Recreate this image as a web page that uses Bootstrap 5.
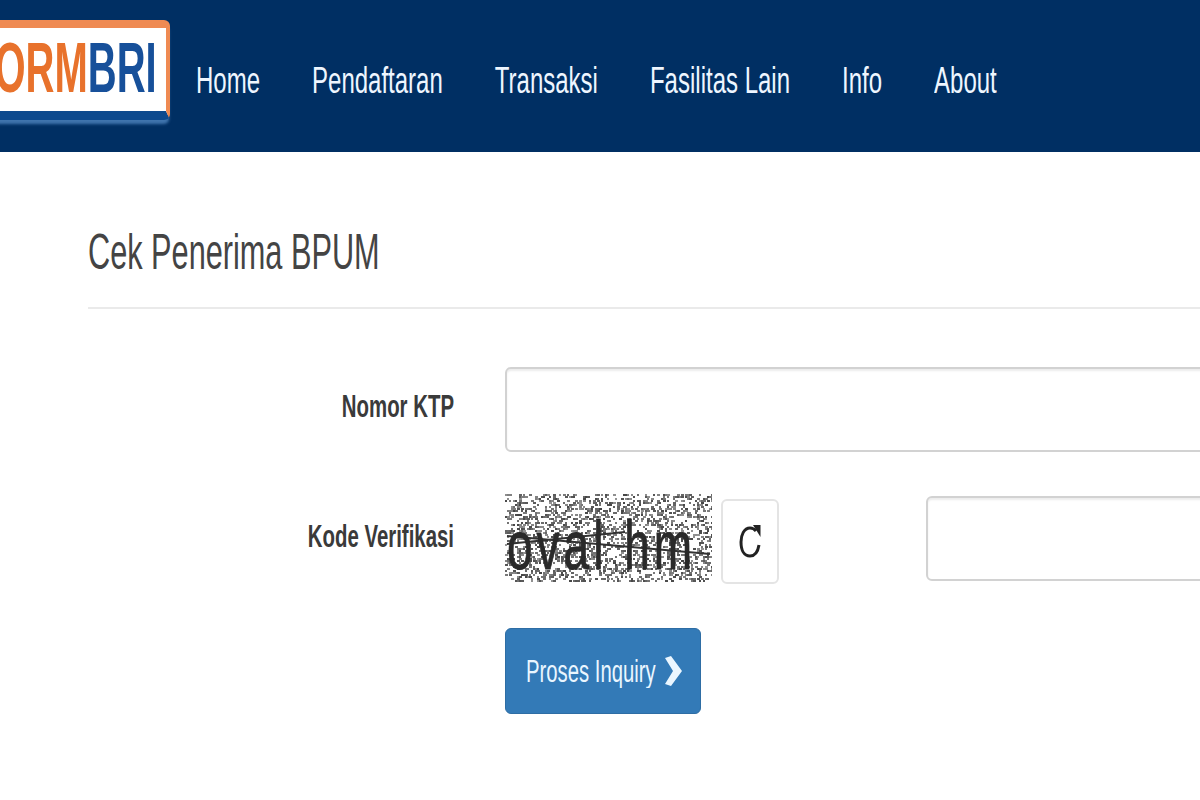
<!DOCTYPE html>
<html lang="id">
<head>
    <meta charset="UTF-8">
    <meta name="viewport" content="width=device-width, initial-scale=1.0">
    <title>Cek Penerima BPUM</title>
    <link href="https://cdn.jsdelivr.net/npm/bootstrap@5.3.0/dist/css/bootstrap.min.css" rel="stylesheet">
    <style>
        html, body { overflow: hidden; height: 100%; }
        body { font-family: "Liberation Sans", Arial, sans-serif; color: #333; background: #fff; }

        /* the screenshot is stretched vertically, so text gets scaled up on Y only */
        .tall { display: inline-block; transform: scaleY(1.55); transform-origin: center; }

        .top-bar { background: #002f63; height: 152px; padding: 0; flex-wrap: nowrap; justify-content: flex-start; }
        .logo-box {
            width: 220px; height: 100px; margin: 0 0 0 -50px; flex-shrink: 0; align-self: flex-start; margin-top: 20px;
            background: #fff; border: solid #ef8a52; border-width: 8px 4px 0 0; border-radius: 5px 6px 6px 0;
            box-shadow: 0 5px 3px -1px #3f74ad;
            border-bottom: 9px solid #0d4a8e;
            padding-left: 20px; overflow: hidden; white-space: nowrap;
            font-weight: 700; font-size: 40px; line-height: 78px; letter-spacing: 0;
        }
        .logo-box .tall { transform: scaleY(1.75); }
        .logo-or { color: #e8722c; }
        .logo-bl { color: #17509a; }
        .main-links { padding-left: 0; gap: 52px; margin-left: 26px; margin-top: 10px; }
        .main-links .nav-link { color: #eef6ff; font-size: 24px; line-height: 30px; padding: 0; white-space: nowrap; }
        .main-links .nav-link:hover { color: #fff; }

        .content-area { padding: 76px 0 0 88px; }
        .page-head { font-size: 30.7px; line-height: 50px; font-weight: 400; color: #444; margin: 0; }
        .page-head .tall { transform: scaleY(1.6); }
        .head-line { margin: 29px 0 58px; border: 0; border-top: 2px solid #eaeaea; opacity: 1; }

        .form-rowx { display: flex; align-items: flex-start; }
        .lbl-col { width: 366px; margin-right: 51px; flex-shrink: 0; text-align: right; font-weight: 700; font-size: 20.4px; color: #3a3a3a; padding: 0; line-height: 30px; }
        .lbl-ktp { margin-top: 24px; }
        .lbl-kode { margin-top: 27px; }
        .big-input { height: 85px; width: 900px; flex-shrink: 0; border: 2px solid #d2d2d2; border-radius: 6px; box-shadow: inset 0 2px 2px rgba(0,0,0,.08); }
        .code-input { width: 400px; height: 85px; margin: 2px 0 0 147px; }
        .row-kode { margin-top: 42px; }
        .row-submit { margin-top: 44px; }

        .captcha-box { position: relative; width: 207px; height: 88px; flex-shrink: 0; }
        .captcha-box canvas { display: block; filter: blur(.45px); }
        .captcha-txt {
            position: absolute; left: 2px; top: 31px; color: #2a2a2a; white-space: nowrap;
            font-family: "Liberation Sans", sans-serif; font-size: 46px; line-height: 40px; letter-spacing: 4px;
            -webkit-text-stroke: .6px #2a2a2a; transform: scaleY(1.5); transform-origin: left center; filter: blur(.4px);
        }
        .btn-reload {
            width: 58px; height: 85px; margin: 5px 0 0 9px; padding: 0; flex-shrink: 0; background: #fff;
            border: 2px solid #e4e4e4; border-radius: 6px; display: flex; align-items: center; justify-content: center;
        }
        .btn-inquiry {
            --bs-btn-bg: #337ab7; --bs-btn-border-color: #2e6da4; --bs-btn-hover-bg: #286090; --bs-btn-hover-border-color: #204d74;
            width: 196px; height: 86px; margin-left: 417px; border-radius: 6px; padding: 0 0 0 20px; font-size: 20.3px; color: #eaf6ff;
            display: flex; align-items: center; gap: 9px;
        }
    </style>
</head>
<body>
    <nav class="navbar top-bar">
        <a class="logo-box text-decoration-none" href="#"><span class="tall"><span class="logo-or">FORM</span><span class="logo-bl">BRI</span></span></a>
        <ul class="nav main-links flex-nowrap">
            <li class="nav-item"><a class="nav-link" href="#"><span class="tall">Home</span></a></li>
            <li class="nav-item"><a class="nav-link" href="#"><span class="tall">Pendaftaran</span></a></li>
            <li class="nav-item"><a class="nav-link" href="#"><span class="tall">Transaksi</span></a></li>
            <li class="nav-item"><a class="nav-link" href="#"><span class="tall">Fasilitas Lain</span></a></li>
            <li class="nav-item"><a class="nav-link" href="#"><span class="tall">Info</span></a></li>
            <li class="nav-item"><a class="nav-link" href="#"><span class="tall">About</span></a></li>
        </ul>
    </nav>

    <div class="content-area">
        <h1 class="page-head"><span class="tall">Cek Penerima BPUM</span></h1>
        <hr class="head-line">

        <form>
            <div class="form-rowx">
                <label class="lbl-col lbl-ktp" for="ktp"><span class="tall">Nomor KTP</span></label>
                <input id="ktp" type="text" class="form-control big-input">
            </div>

            <div class="form-rowx row-kode">
                <label class="lbl-col lbl-kode" for="kode"><span class="tall">Kode Verifikasi</span></label>
                <div class="captcha-box">
                    <canvas id="noise" width="207" height="88"></canvas>
                    <span class="captcha-txt">oval hm</span>
                </div>
                <button type="button" class="btn btn-reload" aria-label="Muat ulang">
                    <svg width="24" height="36" viewBox="0 0 24 36" fill="none" stroke="#222" stroke-width="3">
                        <path d="M18 7 C16 4.500 14 4 12 4 C6 4 3 11 3 18 C3 26 6 32 12 32 C17 32 20 27 21 21"/>
                        <path d="M15 1 L22.500 1 L22.500 13 Z" fill="#222" stroke="none"/>
                    </svg>
                </button>
                <input id="kode" type="text" class="form-control big-input code-input">
            </div>

            <div class="form-rowx row-submit">
                <button type="button" class="btn btn-primary btn-inquiry">
                    <span class="tall">Proses Inquiry</span>
                    <svg width="17" height="30" viewBox="0 0 17 30" fill="#eaf6ff"><path d="M0 2 L6 0 L17 15 L6 30 L0 28 L8 15 Z"/></svg>
                </button>
            </div>
        </form>
    </div>

    <script>
        // captcha noise
        const ctx = document.getElementById('noise').getContext('2d');
        let seed = 7;
        function rnd() {
            seed = (seed * 16807) % 2147483647;
            return seed / 2147483647;
        }
        for (let y = 0; y < 88; y += 2) {
            for (let x = 0; x < 207; x += 2) {
                if (rnd() < 0.36) {
                    const g = 70 + Math.floor(rnd() * 80);
                    ctx.fillStyle = `rgb(${g},${g},${g})`;
                    ctx.fillRect(x, y, 2 + Math.floor(rnd() * 2), 2);
                }
            }
        }
        // strike lines across the code
        ctx.strokeStyle = '#333';
        ctx.lineWidth = 2;
        ctx.beginPath();
        ctx.moveTo(2, 42);
        ctx.lineTo(205, 60);
        ctx.moveTo(2, 50);
        ctx.lineTo(120, 38);
        ctx.stroke();
    </script>
</body>
</html>
